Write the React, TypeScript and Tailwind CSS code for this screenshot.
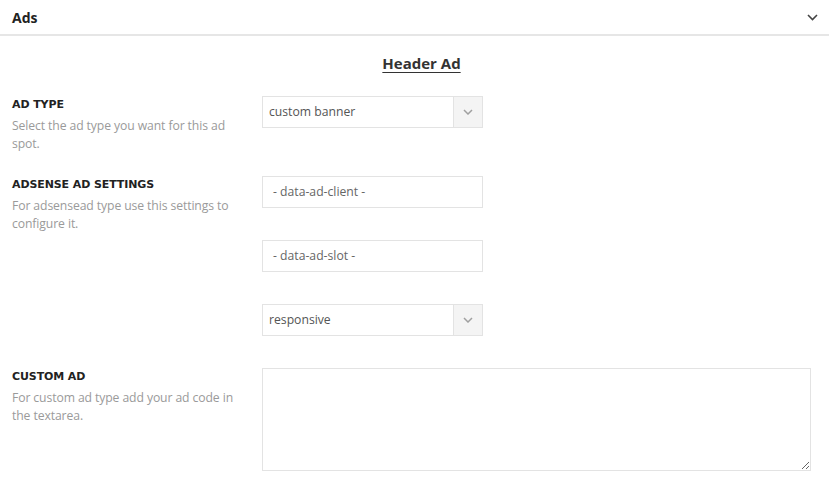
const body = { fontFamily: '"Open Sans", "Liberation Sans", sans-serif' };
const heading = { fontFamily: '"DejaVu Sans", "Liberation Sans", sans-serif' };

function Label({ title, text }: { title: string; text: string }) {
  return (
    <div className="w-[250px] shrink-0 pt-[1px] pb-[23px]">
      <div className="text-[11px] leading-[16px] font-bold text-[#222] uppercase tracking-[-0.1px]" style={heading}>
        {title}
      </div>
      <p className="mt-[4px] w-[242px] text-[12.2px] leading-[18px] tracking-[-0.1px] text-[#9a9a9a]">{text}</p>
    </div>
  );
}

function Chevron() {
  return (
    <svg width="10" height="6" viewBox="0 0 10 6" className="text-[#a0a0a0]">
      <polyline points="1,1 5,5 9,1" fill="none" stroke="currentColor" strokeWidth="1.5" />
    </svg>
  );
}

function Select({ value }: { value: string }) {
  return (
    <div className="mb-8 flex h-8 w-[221px] border border-[#e3e3e3] bg-white">
      <div className="flex flex-1 items-center pl-[6px] text-[12.2px] text-[#555]">{value}</div>
      <div className="flex w-[29px] items-center justify-center border-l border-[#e3e3e3] bg-[#f4f4f4]">
        <Chevron />
      </div>
    </div>
  );
}

function Input({ placeholder }: { placeholder: string }) {
  return (
    <div className="mb-8 flex h-8 w-[221px] items-center border border-[#e3e3e3] bg-white pl-[10px] text-[12.2px] text-[#666]">
      {placeholder}
    </div>
  );
}

export default function App() {
  return (
    <div className="min-h-[499px] w-full bg-white" style={body}>
      <div className="flex h-[36px] items-center justify-between border-b-2 border-[#e6e6e6] pl-3 pr-[11px]">
        <span className="text-[14px] font-bold text-[#222]">Ads</span>
        <svg width="11" height="7" viewBox="0 0 11 7" className="text-[#444]">
          <polyline points="1,1 5.5,5.5 10,1" fill="none" stroke="currentColor" strokeWidth="1.6" />
        </svg>
      </div>

      <div className="pt-[15px] pl-[14px] text-center">
        <span className="text-[15px] font-bold text-[#333] underline underline-offset-[3px]">Header Ad</span>
      </div>

      <div className="mt-[21px] pl-3 pr-[18px]">
        <div className="flex items-start">
          <Label title="Ad Type" text="Select the ad type you want for this ad spot." />
          <div>
            <Select value="custom banner" />
          </div>
        </div>

        <div className="flex items-start">
          <Label title="Adsense Ad Settings" text="For adsensead type use this settings to configure it." />
          <div>
            <Input placeholder="- data-ad-client -" />
            <Input placeholder="- data-ad-slot -" />
            <Select value="responsive" />
          </div>
        </div>

        <div className="flex items-start">
          <Label title="Custom Ad" text="For custom ad type add your ad code in the textarea." />
          <textarea className="block h-[103px] flex-1 border border-[#e3e3e3] bg-white outline-none" />
        </div>
      </div>
    </div>
  );
}
